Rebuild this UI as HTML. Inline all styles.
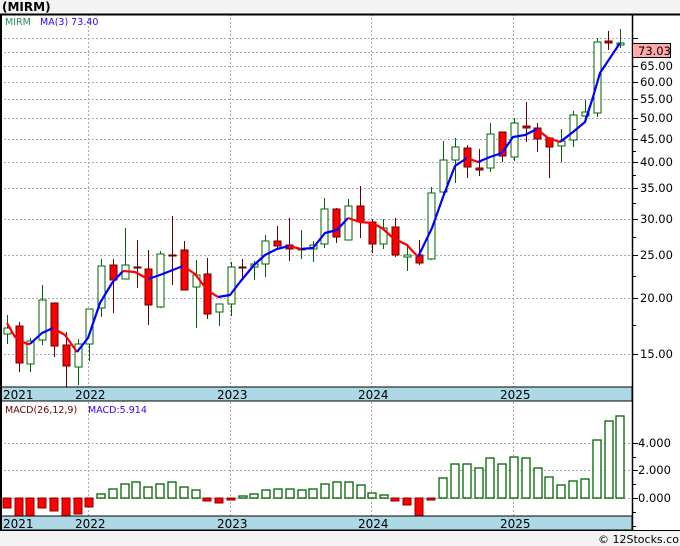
<!DOCTYPE html>
<html><head><meta charset="utf-8"><style>
html,body{margin:0;padding:0;background:#f3f3f3;}
svg{display:block;font-family:"DejaVu Sans","Liberation Sans",sans-serif;}
</style></head><body>
<svg width="680" height="546" viewBox="0 0 680 546" xmlns="http://www.w3.org/2000/svg">
<rect x="0" y="0" width="680" height="546" fill="#f3f3f3"/>
<text x="2" y="11" font-size="12" font-weight="bold" fill="#000">(MIRM)</text>
<rect x="0" y="14" width="680" height="516" fill="#fff"/>
<!-- grids -->
<g stroke="#aaa" stroke-dasharray="2,2" stroke-width="1">
<line x1="0" x2="632" y1="38.5" y2="38.5"/><line x1="0" x2="632" y1="52.5" y2="52.5"/><line x1="0" x2="632" y1="66.5" y2="66.5"/><line x1="0" x2="632" y1="82.5" y2="82.5"/><line x1="0" x2="632" y1="99.5" y2="99.5"/><line x1="0" x2="632" y1="118.5" y2="118.5"/><line x1="0" x2="632" y1="139.5" y2="139.5"/><line x1="0" x2="632" y1="162.5" y2="162.5"/><line x1="0" x2="632" y1="188.5" y2="188.5"/><line x1="0" x2="632" y1="219.5" y2="219.5"/><line x1="0" x2="632" y1="255.5" y2="255.5"/><line x1="0" x2="632" y1="298.5" y2="298.5"/><line x1="0" x2="632" y1="354.5" y2="354.5"/>
<line x1="0" x2="632" y1="443.5" y2="443.5"/><line x1="0" x2="632" y1="470.5" y2="470.5"/><line x1="0" x2="632" y1="498.5" y2="498.5"/>
<line x1="88.5" x2="88.5" y1="14" y2="530"/><line x1="230.5" x2="230.5" y1="14" y2="530"/><line x1="371.5" x2="371.5" y1="14" y2="530"/><line x1="513.5" x2="513.5" y1="14" y2="530"/>
</g>
<!-- candles -->
<g stroke-width="1">
<g stroke="#006400" fill="#fff">
<line x1="7.5" x2="7.5" y1="315" y2="344"/><rect x="4" y="328" width="7" height="6"/>
<line x1="30.5" x2="30.5" y1="338" y2="372"/><rect x="27" y="341" width="7" height="23"/>
<line x1="42.5" x2="42.5" y1="285" y2="345"/><rect x="39" y="300" width="7" height="40"/>
<line x1="78.5" x2="78.5" y1="339" y2="385"/><rect x="75" y="344" width="7" height="23"/>
<line x1="89.5" x2="89.5" y1="309" y2="361"/><rect x="86" y="309" width="7" height="35"/>
<line x1="101.5" x2="101.5" y1="259" y2="317"/><rect x="98" y="266" width="7" height="42"/>
<line x1="125.5" x2="125.5" y1="228" y2="279"/><rect x="122" y="265" width="7" height="14"/>
<line x1="160.5" x2="160.5" y1="251" y2="308"/><rect x="157" y="254" width="7" height="53"/>
<line x1="196.5" x2="196.5" y1="260" y2="328"/><rect x="193" y="275" width="7" height="12"/>
<line x1="219.5" x2="219.5" y1="304" y2="326"/><rect x="216" y="304" width="7" height="8"/>
<line x1="231.5" x2="231.5" y1="262" y2="316"/><rect x="228" y="267" width="7" height="37"/>
<line x1="254.5" x2="254.5" y1="261" y2="280"/><rect x="251" y="264" width="7" height="3"/>
<line x1="265.5" x2="265.5" y1="235" y2="277"/><rect x="262" y="241" width="7" height="23"/>
<line x1="301.5" x2="301.5" y1="230" y2="259"/><rect x="298" y="249" width="7" height="1"/>
<line x1="313.5" x2="313.5" y1="241" y2="262"/><rect x="310" y="245" width="7" height="4"/>
<line x1="324.5" x2="324.5" y1="198" y2="248"/><rect x="321" y="209" width="7" height="35"/>
<line x1="348.5" x2="348.5" y1="199" y2="240"/><rect x="345" y="206" width="7" height="34"/>
<line x1="383.5" x2="383.5" y1="219" y2="249"/><rect x="380" y="228" width="7" height="16"/>
<line x1="407.5" x2="407.5" y1="244" y2="271"/><rect x="404" y="255" width="7" height="2"/>
<line x1="431.5" x2="431.5" y1="187" y2="260"/><rect x="428" y="193" width="7" height="66"/>
<line x1="443.5" x2="443.5" y1="141" y2="198"/><rect x="440" y="160" width="7" height="32"/>
<line x1="455.5" x2="455.5" y1="138" y2="183"/><rect x="452" y="147" width="7" height="13"/>
<line x1="490.5" x2="490.5" y1="123" y2="172"/><rect x="487" y="134" width="7" height="34"/>
<line x1="514.5" x2="514.5" y1="118" y2="161"/><rect x="511" y="123" width="7" height="34"/>
<line x1="561.5" x2="561.5" y1="129" y2="162"/><rect x="558" y="141" width="7" height="5"/>
<line x1="573.5" x2="573.5" y1="111" y2="147"/><rect x="570" y="115" width="7" height="25"/>
<line x1="585.5" x2="585.5" y1="100" y2="120"/><rect x="582" y="112" width="7" height="4"/>
<line x1="597.5" x2="597.5" y1="38" y2="117"/><rect x="594" y="42" width="7" height="71"/>
<line x1="620.5" x2="620.5" y1="29" y2="48"/><rect x="617" y="43" width="7" height="2"/>
</g>
<g stroke="#600" fill="#f00">
<line x1="19.5" x2="19.5" y1="322" y2="372"/><rect x="16" y="326" width="7" height="37"/>
<line x1="54.5" x2="54.5" y1="303" y2="357"/><rect x="51" y="303" width="7" height="43"/>
<line x1="66.5" x2="66.5" y1="332" y2="387"/><rect x="63" y="345" width="7" height="21"/>
<line x1="113.5" x2="113.5" y1="259" y2="313"/><rect x="110" y="265" width="7" height="15"/>
<line x1="137.5" x2="137.5" y1="240" y2="288"/><rect x="134" y="267" width="7" height="1"/>
<line x1="148.5" x2="148.5" y1="250" y2="325"/><rect x="145" y="269" width="7" height="36"/>
<line x1="172.5" x2="172.5" y1="216" y2="285"/><rect x="169" y="255" width="7" height="1"/>
<line x1="184.5" x2="184.5" y1="241" y2="290"/><rect x="181" y="250" width="7" height="40"/>
<line x1="207.5" x2="207.5" y1="258" y2="319"/><rect x="204" y="274" width="7" height="40"/>
<line x1="242.5" x2="242.5" y1="259" y2="280"/><rect x="239" y="267" width="7" height="1"/>
<line x1="277.5" x2="277.5" y1="226" y2="249"/><rect x="274" y="241" width="7" height="5"/>
<line x1="289.5" x2="289.5" y1="218" y2="261"/><rect x="286" y="245" width="7" height="4"/>
<line x1="336.5" x2="336.5" y1="208" y2="243"/><rect x="333" y="209" width="7" height="28"/>
<line x1="360.5" x2="360.5" y1="186" y2="238"/><rect x="357" y="206" width="7" height="16"/>
<line x1="372.5" x2="372.5" y1="219" y2="253"/><rect x="369" y="222" width="7" height="22"/>
<line x1="395.5" x2="395.5" y1="218" y2="257"/><rect x="392" y="227" width="7" height="28"/>
<line x1="419.5" x2="419.5" y1="240" y2="265"/><rect x="416" y="255" width="7" height="8"/>
<line x1="467.5" x2="467.5" y1="145" y2="178"/><rect x="464" y="148" width="7" height="19"/>
<line x1="479.5" x2="479.5" y1="149" y2="176"/><rect x="476" y="168" width="7" height="2"/>
<line x1="502.5" x2="502.5" y1="132" y2="162"/><rect x="499" y="132" width="7" height="24"/>
<line x1="526.5" x2="526.5" y1="102" y2="142"/><rect x="523" y="126" width="7" height="2"/>
<line x1="537.5" x2="537.5" y1="123" y2="152"/><rect x="534" y="128" width="7" height="11"/>
<line x1="549.5" x2="549.5" y1="137" y2="178"/><rect x="546" y="138" width="7" height="9"/>
<line x1="608.5" x2="608.5" y1="31" y2="50"/><rect x="605" y="41" width="7" height="2"/>
</g>
</g>
<!-- MA -->
<g fill="none" stroke-width="2.2" stroke-linejoin="round">
<polyline stroke="#f00" points="7,323 15,337 27,344 30,344"/>
<polyline stroke="#00f" points="30,344 42,333 53,328"/>
<polyline stroke="#f00" points="53,328 65,335 77,352"/>
<polyline stroke="#00f" points="77,352 88,338 100,303 112,283 123,271"/>
<polyline stroke="#f00" points="123,271 135,272 148,279"/>
<polyline stroke="#00f" points="148,279 160,275 183,266"/>
<polyline stroke="#f00" points="183,266 195,274 207,290 218,297"/>
<polyline stroke="#00f" points="218,297 230,295 240,282 254,265 265,255 277,249 289,246"/>
<polyline stroke="#f00" points="289,246 301,249"/>
<polyline stroke="#00f" points="301,249 313,248 325,233 337,230 348,218"/>
<polyline stroke="#f00" points="348,218 360,222 372,223 382,228 393,238 407,245 418,257"/>
<polyline stroke="#00f" points="418,257 432,228 443,197 455,166 467,158"/>
<polyline stroke="#f00" points="467,158 478,162"/>
<polyline stroke="#00f" points="478,162 490,157 502,153 513,137 525,135 537,129"/>
<polyline stroke="#f00" points="537,129 548,138 560,142"/>
<polyline stroke="#00f" points="560,142 573,132 585,122 593,97 600,73 620,43"/>
</g>
<text x="5" y="25" font-size="9.5" fill="#2e8b57">MIRM</text>
<text x="40" y="25" font-size="9.5" fill="#3300ff">MA(3)  73.40</text>
<!-- date band 1 -->
<rect x="0" y="387" width="632" height="14" fill="#add8e6" stroke="#000" stroke-width="1"/>
<g font-size="12" fill="#000"><text x="3" y="399">2021</text><text x="75" y="399">2022</text><text x="217" y="399">2023</text><text x="358" y="399">2024</text><text x="500" y="399">2025</text></g>
<!-- MACD -->
<text x="5" y="413" font-size="9.5" fill="#600">MACD(26,12,9)</text>
<text x="88" y="413" font-size="9.5" fill="#3300ff">MACD:5.914</text>
<g stroke="#800" fill="#f00">
<rect x="3" y="498" width="8" height="10"/><rect x="15" y="498" width="8" height="18"/><rect x="26" y="498" width="8" height="18"/><rect x="38" y="498" width="8" height="10"/><rect x="50" y="498" width="8" height="13"/><rect x="62" y="498" width="8" height="18"/><rect x="74" y="498" width="8" height="16"/><rect x="85" y="498" width="8" height="9"/>
<rect x="203" y="498" width="8" height="3"/><rect x="215" y="498" width="8" height="5"/><rect x="227" y="498" width="8" height="2"/>
<rect x="391" y="498" width="8" height="3"/><rect x="403" y="498" width="8" height="7"/><rect x="415" y="498" width="8" height="18"/><rect x="427" y="498" width="8" height="2"/>
</g>
<g stroke="#006400" fill="#fff" stroke-width="1.3">
<rect x="97" y="494" width="8" height="4"/><rect x="109" y="489" width="8" height="9"/><rect x="121" y="484" width="8" height="14"/><rect x="132" y="482" width="8" height="16"/><rect x="144" y="487" width="8" height="11"/><rect x="156" y="484" width="8" height="14"/><rect x="168" y="482" width="8" height="16"/><rect x="180" y="487" width="8" height="11"/><rect x="192" y="490" width="8" height="8"/>
<rect x="239" y="496" width="8" height="2"/><rect x="250" y="494" width="8" height="4"/><rect x="262" y="490" width="8" height="8"/><rect x="274" y="489" width="8" height="9"/><rect x="286" y="489" width="8" height="9"/><rect x="298" y="490" width="8" height="8"/><rect x="309" y="489" width="8" height="9"/><rect x="321" y="484" width="8" height="14"/><rect x="333" y="482" width="8" height="16"/><rect x="345" y="482" width="8" height="16"/><rect x="357" y="485" width="8" height="13"/><rect x="368" y="493" width="8" height="5"/><rect x="380" y="495" width="8" height="3"/>
<rect x="439" y="478" width="8" height="20"/><rect x="451" y="464" width="8" height="34"/><rect x="463" y="464" width="8" height="34"/><rect x="475" y="468" width="8" height="30"/><rect x="486" y="458" width="8" height="40"/><rect x="498" y="464" width="8" height="34"/><rect x="510" y="457" width="8" height="41"/><rect x="522" y="458" width="8" height="40"/><rect x="534" y="468" width="8" height="30"/><rect x="545" y="477" width="8" height="21"/><rect x="557" y="485" width="8" height="13"/><rect x="569" y="481" width="8" height="17"/><rect x="581" y="479" width="8" height="19"/><rect x="593" y="440" width="8" height="58"/><rect x="605" y="421" width="8" height="77"/><rect x="616" y="416" width="8" height="82"/>
</g>
<rect x="0" y="516" width="632" height="14" fill="#add8e6" stroke="#000" stroke-width="1"/>
<g font-size="12" fill="#000"><text x="3" y="528">2021</text><text x="75" y="528">2022</text><text x="217" y="528">2023</text><text x="358" y="528">2024</text><text x="500" y="528">2025</text></g>
<!-- borders -->
<line x1="0" x2="680" y1="14.5" y2="14.5" stroke="#000" stroke-width="2"/>
<line x1="1" x2="1" y1="14" y2="530" stroke="#000" stroke-width="2"/>
<line x1="632.5" x2="632.5" y1="14" y2="530" stroke="#000" stroke-width="1.5"/>
<rect x="0" y="530" width="680" height="16" fill="#f3f3f3"/>
<line x1="0" x2="680" y1="530.5" y2="530.5" stroke="#000" stroke-width="1"/>
<!-- axis ticks -->
<g stroke="#000">
<line x1="632" x2="638" y1="38.5" y2="38.5"/><line x1="632" x2="638" y1="66.5" y2="66.5"/><line x1="632" x2="638" y1="82.5" y2="82.5"/><line x1="632" x2="638" y1="99.5" y2="99.5"/><line x1="632" x2="638" y1="118.5" y2="118.5"/><line x1="632" x2="636" y1="129.5" y2="129.5"/><line x1="632" x2="638" y1="139.5" y2="139.5"/><line x1="632" x2="636" y1="151.5" y2="151.5"/><line x1="632" x2="638" y1="162.5" y2="162.5"/><line x1="632" x2="636" y1="175.5" y2="175.5"/><line x1="632" x2="638" y1="188.5" y2="188.5"/><line x1="632" x2="636" y1="203.5" y2="203.5"/><line x1="632" x2="638" y1="219.5" y2="219.5"/><line x1="632" x2="636" y1="237.5" y2="237.5"/><line x1="632" x2="638" y1="255.5" y2="255.5"/><line x1="632" x2="636" y1="276.5" y2="276.5"/><line x1="632" x2="638" y1="298.5" y2="298.5"/><line x1="632" x2="636" y1="325.5" y2="325.5"/><line x1="632" x2="638" y1="354.5" y2="354.5"/>
<line x1="632" x2="638" y1="443.5" y2="443.5"/><line x1="632" x2="636" y1="457.5" y2="457.5"/><line x1="632" x2="638" y1="470.5" y2="470.5"/><line x1="632" x2="636" y1="484.5" y2="484.5"/><line x1="632" x2="638" y1="498.5" y2="498.5"/><line x1="632" x2="636" y1="512.5" y2="512.5"/><line x1="632" x2="636" y1="526.5" y2="526.5"/>
</g>
<g font-size="11.5" fill="#000">
<text x="640" y="70">65.00</text><text x="640" y="86">60.00</text><text x="640" y="103">55.00</text><text x="640" y="122">50.00</text><text x="640" y="143">45.00</text><text x="640" y="166">40.00</text><text x="640" y="192">35.00</text><text x="640" y="223">30.00</text><text x="640" y="259">25.00</text><text x="640" y="302">20.00</text><text x="640" y="358">15.00</text>
<text x="638" y="447">4.000</text><text x="638" y="474">2.000</text><text x="638" y="502">0.000</text>
</g>
<rect x="632.5" y="43.5" width="38" height="14" fill="#ffaaaa" stroke="#000"/>
<text x="638" y="55" font-size="11.5" fill="#000">73.03</text>
<text x="598" y="543" font-size="11" fill="#000">© 12Stocks.com</text>
</svg>
</body></html>
